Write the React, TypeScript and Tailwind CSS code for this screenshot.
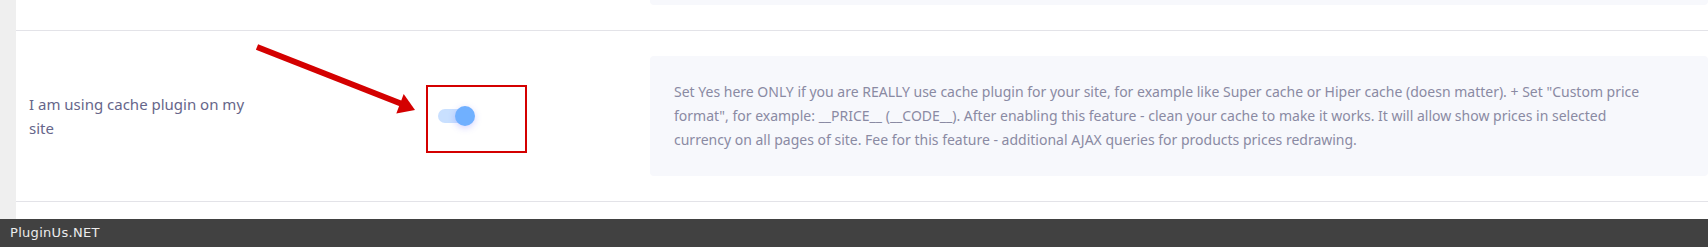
import React from "react";

// the help text keeps the same three lines as the plugin page
const descLines = [
  'Set Yes here ONLY if you are REALLY use cache plugin for your site, for example like Super cache or Hiper cache (doesn matter). + Set "Custom price',
  'format", for example: __PRICE__ (__CODE__). After enabling this feature - clean your cache to make it works. It will allow show prices in selected',
  "currency on all pages of site. Fee for this feature - additional AJAX queries for products prices redrawing.",
];

function Toggle() {
  return (
    <div className="relative h-[20px] w-[38px]">
      <div className="absolute left-0 top-[3px] h-[14px] w-[32px] rounded-full bg-[#c9e0ff]" />
      <div className="absolute left-[17px] top-0 h-[20px] w-[20px] rounded-full bg-[#70b0ff] shadow-[0_2px_7px_rgba(110,110,255,0.3)]" />
    </div>
  );
}

export default function App() {
  return (
    <div className="relative flex h-[247px] w-full flex-col overflow-hidden bg-white font-['Noto_Sans',sans-serif]">
      <div className="flex flex-1">
        <div className="w-[16px] shrink-0 bg-[#efefef]" />
        <div className="flex flex-1 flex-col">
          {/* previous setting, only its box bottom shows */}
          <div className="flex border-b border-[#e3e3e8] pb-[25px]">
            <div className="w-[634px] shrink-0" />
            <div className="h-[5px] flex-1 rounded-b-[4px] bg-[#f7f8fc]" />
          </div>

          <div className="flex border-b border-[#e3e3e8] py-[25px]">
            <div className="flex w-[409px] shrink-0 items-center pl-[13px]">
              <p className="w-[240px] text-[15px] leading-[24px] text-[#66668a]">
                I am using cache plugin on my site
              </p>
            </div>
            <div className="w-[225px] shrink-0 pt-[29px]">
              <div className="ml-[1px] h-[68px] w-[101px] border-2 border-[#d40000] pl-[10px] pt-[19px]">
                <Toggle />
              </div>
            </div>
            <div className="min-w-0 flex-1 rounded-[4px] bg-[#f7f8fc] py-[24px] pl-[24px]">
              {descLines.map((line) => (
                <p
                  key={line}
                  className="whitespace-nowrap text-[14px] leading-[24px] text-[#8a8aa3]"
                >
                  {line}
                </p>
              ))}
            </div>
          </div>
          <div className="flex-1" />
        </div>
      </div>

      <div className="flex h-[28px] shrink-0 items-center bg-[#414141] pl-[10px]">
        <span className="font-['DejaVu_Sans',sans-serif] text-[13px] tracking-[0.3px] text-[#ececec]">
          PluginUs.NET
        </span>
      </div>

      {/* annotation arrow */}
      <svg
        className="pointer-events-none absolute left-0 top-0"
        width="1708"
        height="247"
        viewBox="0 0 1708 247"
      >
        <line x1="257" y1="47" x2="402" y2="104" stroke="#d40000" strokeWidth="6" />
        <polygon points="415,110 403.7,94 396.3,113.5" fill="#d40000" />
      </svg>
    </div>
  );
}
